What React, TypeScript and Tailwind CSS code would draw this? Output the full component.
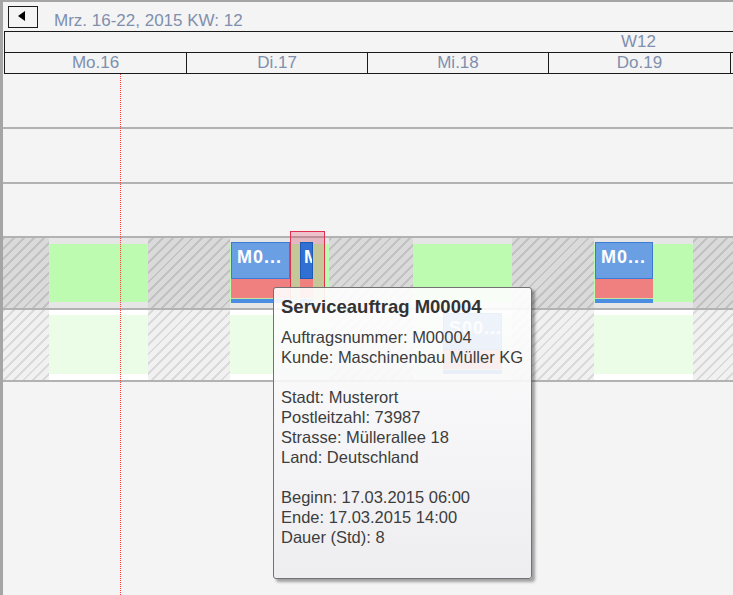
const hatchDark =
  "bg-[repeating-linear-gradient(135deg,#c2c2c2_0px,#c2c2c2_2px,#dadada_2px,#dadada_7px)]"
const hatchLight =
  "bg-[repeating-linear-gradient(135deg,#dadada_0px,#dadada_2px,#f1f1f1_2px,#f1f1f1_7px)]"

const days = ["Mo.16", "Di.17", "Mi.18", "Do.19"]

function Order({ left, width, top, label, dark }: { left: number; width: number; top: number; label: string; dark?: boolean }) {
  return (
    <div className="absolute flex flex-col" style={{ left, width, top }}>
      <div
        className={
          dark
            ? "h-[37px] overflow-hidden border border-[#1d5ab5] bg-[#2f70d2] pl-[3px] pt-[3px] text-[18px] font-bold leading-[22px] text-white"
            : "h-[37px] overflow-hidden border border-[#3d7ad6] bg-[#6b9fe3] pl-[5px] pt-[3px] text-[18px] font-bold leading-[22px] tracking-[1px] text-white"
        }
      >
        {label}
      </div>
      <div className="h-[19px] bg-[#f08080]" />
      <div className="h-[1px] bg-[#c4e4a4]" />
      <div className="h-[4px] bg-[#4b8de0]" />
    </div>
  )
}

export default function App() {
  return (
    <div className="relative h-[595px] w-[733px] overflow-hidden border-l-[3px] border-t-2 border-[#a5a5a5] bg-[#f4f4f4] font-['Liberation_Sans',Arial,sans-serif]">
      {/* toolbar */}
      <div className="flex h-[29px] items-start pl-[5px] pt-[4px]">
        <button className="flex h-[22px] w-[30px] items-center justify-center border border-[#1a1a1a] bg-[#f4f4f4] pr-[4px] pb-[2px]">
          <svg width="7" height="10" viewBox="0 0 7 10">
            <polygon points="7,0 0,5 7,10" fill="#000" />
          </svg>
        </button>
        <span className="ml-[16px] mt-[5px] text-[17px] leading-[20px] text-[#7f8fae]">Mrz. 16-22, 2015 KW: 12</span>
      </div>

      {/* week header */}
      <div className="ml-[1px] flex h-[22px] items-center border-y border-l border-[#1a1a1a]">
        <span className="ml-[616px] text-[17px] leading-[20px] text-[#7f8fae]">W12</span>
      </div>

      {/* day header */}
      <div className="ml-[1px] flex h-[21px] border-b border-l border-[#1a1a1a]">
        {days.map((d, i) => (
          <div
            key={d}
            className={`${i === 0 || i === 3 ? "w-[182px]" : "w-[181px]"} shrink-0 border-r border-[#1a1a1a] text-center text-[17px] leading-[20px] text-[#7f8fae]`}
          >
            {d}
          </div>
        ))}
      </div>

      {/* empty resource rows */}
      <div className="h-[55px] border-b-2 border-[#b2b2b2]" />
      <div className="h-[55px] border-b-2 border-[#b2b2b2]" />
      <div className="h-[54px] border-b-2 border-[#b2b2b2]" />

      {/* planned row */}
      <div className={`relative flex h-[72px] border-b-2 border-[#b2b2b2] ${hatchDark}`}>
        {[46, 82, 84, 82].map((ml, i) => (
          <div key={i} className="h-full w-[99px] shrink-0 bg-[#e6e6e6] pt-[6px]" style={{ marginLeft: ml }}>
            <div className="h-[58px] bg-[#bdfcb0]" />
          </div>
        ))}
        <Order left={228} width={59} top={4} label="M0..." />
        <Order left={592} width={58} top={4} label="M0..." />
        <div className="absolute -top-[7px] left-[287px] h-[84px] w-[35px] border-[1.5px] border-[#e0304f] bg-[rgba(225,40,80,0.25)]" />
        <Order left={297} width={13} top={4} label="M" dark />
      </div>

      {/* capacity row */}
      <div className={`relative flex h-[72px] border-b-2 border-[#b2b2b2] ${hatchLight}`}>
        {[46, 82, 84, 82].map((ml, i) => (
          <div key={i} className="h-full w-[99px] shrink-0 bg-white pt-[5px]" style={{ marginLeft: ml }}>
            <div className="h-[59px] bg-[#ebfde6]" />
          </div>
        ))}
        <Order left={440} width={59} top={3} label="S00..." />
      </div>

      {/* now line */}
      <div className="absolute bottom-0 left-[117px] top-[72px] z-10 border-l border-dotted border-[#ff3b3b]" />

      {/* tooltip */}
      <div className="absolute left-[270px] top-[285px] z-20 h-[292px] w-[259px] rounded-[3px] border border-[#727272] bg-gradient-to-b from-white/90 to-[#ededf1]/90 px-[7px] pt-[8px] text-[#3d3d3d] shadow-[3px_3px_3px_rgba(0,0,0,0.35)]">
        <div className="text-[18.5px] font-bold leading-[22px] text-[#333]">Serviceauftrag M00004</div>
        <div className="mt-[9px] text-[16.5px] leading-[20px]">
          <div>Auftragsnummer: M00004</div>
          <div>Kunde: Maschinenbau Müller KG</div>
          <div className="h-[20px]" />
          <div>Stadt: Musterort</div>
          <div>Postleitzahl: 73987</div>
          <div>Strasse: Müllerallee 18</div>
          <div>Land: Deutschland</div>
          <div className="h-[20px]" />
          <div>Beginn: 17.03.2015 06:00</div>
          <div>Ende: 17.03.2015 14:00</div>
          <div>Dauer (Std): 8</div>
        </div>
      </div>
    </div>
  )
}
